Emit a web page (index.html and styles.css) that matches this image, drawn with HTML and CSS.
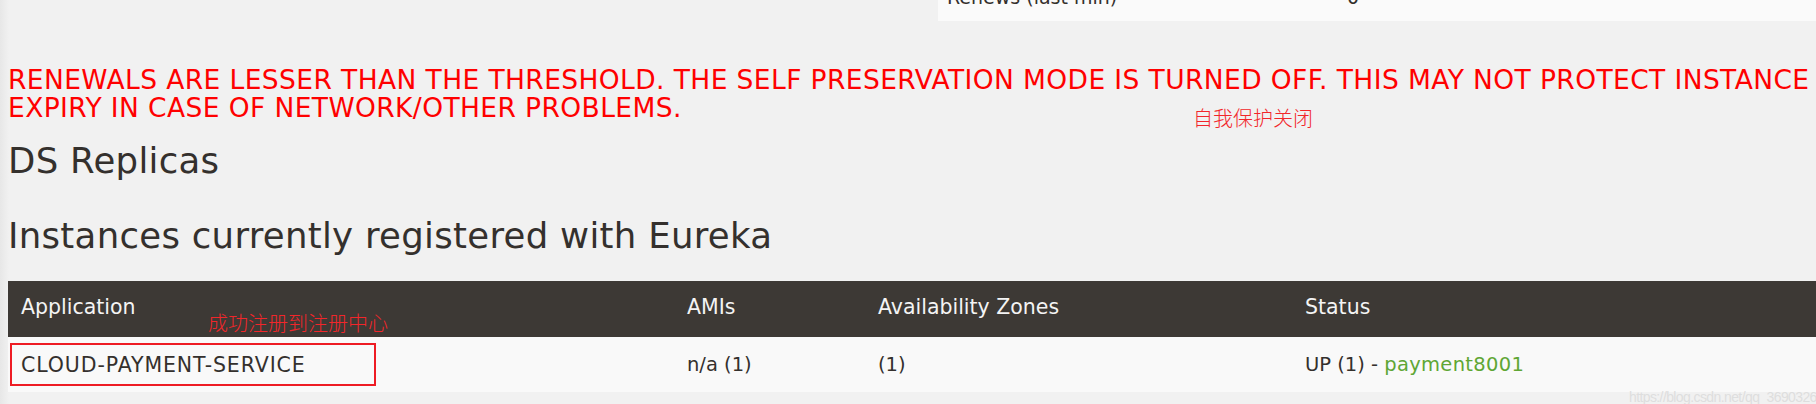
FILE: index.html
```html
<!DOCTYPE html>
<html lang="en">
<head>
<meta charset="utf-8">
<title>Eureka</title>
<link rel="stylesheet" href="styles.css">
</head>
<body>
<div class="page">
  <div class="stats-strip">
    <div class="stats-panel">
      <table class="stats">
        <tr><td class="stats-name">Renews (last min)</td><td class="stats-value">0</td></tr>
      </table>
    </div>
  </div>

  <div class="warning">RENEWALS ARE LESSER THAN THE THRESHOLD. THE SELF PRESERVATION MODE IS TURNED OFF. THIS MAY NOT PROTECT INSTANCE EXPIRY IN CASE OF NETWORK/OTHER PROBLEMS.<span class="note note-self">自我保护关闭</span></div>

  <h2 class="section-title replicas">DS Replicas</h2>
  <h2 class="section-title instances-title">Instances currently registered with Eureka</h2>

  <table class="instances">
    <colgroup>
      <col class="col-app"><col class="col-ami"><col class="col-zone"><col class="col-status">
    </colgroup>
    <thead>
      <tr><th class="th-app">Application<span class="note note-reg">成功注册到注册中心</span></th><th>AMIs</th><th>Availability Zones</th><th>Status</th></tr>
    </thead>
    <tbody>
      <tr><td class="td-app"><span class="mark-box"></span><span class="app-name">CLOUD-PAYMENT-SERVICE</span></td><td>n/a (1)</td><td>(1)</td><td>UP (1) - <a class="instance-link" href="#">payment8001</a></td></tr>
    </tbody>
  </table>
  <div class="watermark">https://blog.csdn.net/qq_36903261</div>
</div>
</body>
</html>
```

FILE: styles.css
```css
html, body {
  margin: 0;
  padding: 0;
}
body {
  width: 1816px;
  height: 404px;
  overflow: hidden;
  background: linear-gradient(to right, #e7e7e7 0, #f1f1f1 9px) #f1f1f1;
  color: #34302d;
  font-family: "DejaVu Sans", "Noto Sans CJK SC", sans-serif;
}
.page {
  position: relative;
  height: 404px;
}
.stats-strip {
  display: flex;
  justify-content: flex-end;
}
.stats-panel {
  width: 878px;
  height: 21px;
  overflow: hidden;
  background: #fafafa;
}
.stats {
  border-collapse: collapse;
  margin-top: -15px;
  font-size: 19px;
  line-height: 24px;
  color: #34302d;
}
.stats td { padding: 0 0 0 9px; }
.stats-name { width: 391px; }

.warning {
  position: relative;
  margin: 45px 0 0 8px;
  color: #ff0000;
  font-size: 26.5px;
  line-height: 27.5px;
  letter-spacing: 0.4px;
}
.note {
  position: absolute;
  color: #f2262a;
  font-family: "Noto Sans CJK SC", sans-serif;
  font-weight: 300;
  font-size: 20px;
  line-height: 20px;
  white-space: nowrap;
  letter-spacing: 0;
}
.note-self { left: 1185px; top: 42px; }

.section-title {
  margin: 0 8px;
  font-weight: 400;
  color: #34302d;
  font-size: 35.5px;
  line-height: 40px;
  letter-spacing: 0.3px;
}
.replicas { margin-top: 20px; }
.instances-title { margin-top: 35px; }

.instances {
  margin: 25px 0 0 8px;
  width: 1808px;
  border-collapse: collapse;
  table-layout: fixed;
}
.col-app { width: 666px; }
.col-ami { width: 191px; }
.col-zone { width: 427px; }
.col-status { width: 524px; }
.instances th {
  background: #3d3935;
  color: #f4f4f4;
  font-weight: 400;
  text-align: left;
  height: 56px;
  box-sizing: border-box;
  padding: 0 13px 4px 13px;
  font-size: 20.5px;
}
.th-app { position: relative; }
.note-reg { left: 200px; top: 32px; }
.instances td {
  background: #f9f9f9;
  height: 55px;
  box-sizing: border-box;
  padding: 0 13px;
  font-size: 19.5px;
  color: #34302d;
}
.td-app { position: relative; }
.app-name { font-size: 20.5px; letter-spacing: 0.9px; }
.mark-box {
  position: absolute;
  left: 2px;
  top: 6px;
  width: 362px;
  height: 39px;
  border: 2px solid #ee1c24;
}
.instance-link {
  color: #5fa634;
  text-decoration: none;
  letter-spacing: 0.3px;
}
.watermark {
  position: absolute;
  right: -8px;
  top: 389px;
  color: #dedede;
  font-family: "Liberation Sans", sans-serif;
  font-size: 14px;
  letter-spacing: -0.6px;
}
```
